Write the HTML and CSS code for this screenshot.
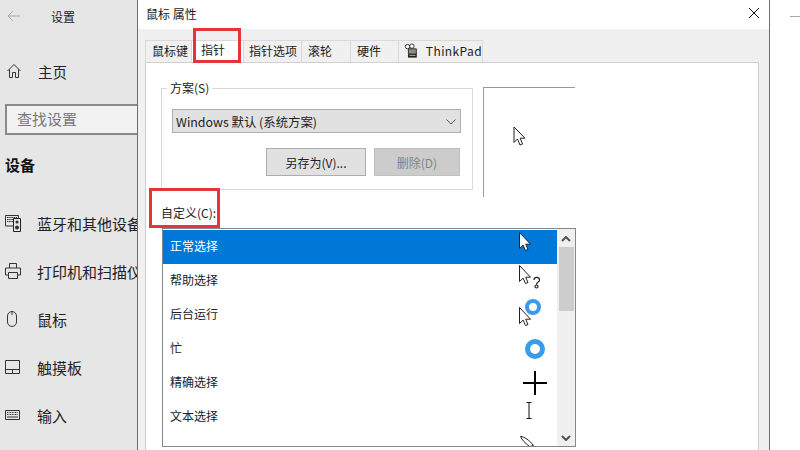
FILE: index.html
```html
<!DOCTYPE html>
<html lang="zh">
<head>
<meta charset="utf-8">
<title>鼠标 属性</title>
<link rel="stylesheet" href="styles.css">
</head>
<body>
<div class="app">
  <aside class="sidebar">
    <div class="side-head">
      <svg class="back" width="14" height="12" viewBox="0 0 14 12"><path d="M6 1 1 6l5 5M1 6h12" fill="none" stroke="#a8a8a8" stroke-width="1"/></svg>
      <span>设置</span>
    </div>
    <div class="home">
      <svg width="16" height="16" viewBox="0 0 16 16"><path d="M1.500 8 8 1.500 14.500 8M3.500 6.500V14.500H6.500V9.500H9.500V14.500H12.500V6.500" fill="none" stroke="#333" stroke-width="1"/></svg>
      <span>主页</span>
    </div>
    <div class="search">查找设置</div>
    <h2 class="side-title">设备</h2>
    <nav class="side-nav">
      <div class="nav-item">
        <svg width="16" height="17" viewBox="0 0 16 17"><path d="M.5.500h13v10.500H.5z" fill="none" stroke="#333"/><path d="M2 2.500h10M2 4.500h6M2 6.500h6" stroke="#333" stroke-dasharray="1.500 .7"/><path d="M8.500 3.500h7v13h-7z" fill="#e6e6e6" stroke="#222"/><circle cx="12" cy="7" r="1.500" fill="#333"/><circle cx="12" cy="12.500" r="2" fill="#333"/></svg>
        <span>蓝牙和其他设备</span>
      </div>
      <div class="nav-item">
        <svg width="16" height="16" viewBox="0 0 16 16"><path d="M4.500 5V.5h7V5M3.500 12H.5V5h15v7h-3M3.500 9.500h9v6h-9z" fill="none" stroke="#333"/></svg>
        <span>打印机和扫描仪</span>
      </div>
      <div class="nav-item">
        <svg width="16" height="16" viewBox="0 0 16 16"><path d="M2.500 5a4.500 4.500 0 0 1 9 0v6a4.500 4.500 0 0 1-9 0zM7 .5V4" fill="none" stroke="#333"/></svg>
        <span>鼠标</span>
      </div>
      <div class="nav-item">
        <svg width="16" height="14" viewBox="0 0 16 14"><path d="M.5.500h14v13H.5zM.5 9.500h14M7.500 9.500v4" fill="none" stroke="#333"/></svg>
        <span>触摸板</span>
      </div>
      <div class="nav-item">
        <svg width="16" height="10" viewBox="0 0 16 10"><path d="M.5.500h14v9H.5z" fill="none" stroke="#333"/><path d="M2 2.500h11M2 4.500h11" stroke="#333" stroke-dasharray="1 .6"/><path d="M2 7h11" stroke="#333"/></svg>
        <span>输入</span>
      </div>
    </nav>
  </aside>

  <main class="dialog">
    <header class="dialog-title">
      <span>鼠标 属性</span>
      <svg width="12" height="12" viewBox="0 0 12 12"><path d="M1 1l10 10M11 1 1 11" stroke="#111" stroke-width="1"/></svg>
    </header>
    <div class="dialog-body">
      <div class="tabs">
        <div class="tab tab-keys">鼠标键</div>
        <div class="tab tab-active">指针</div>
        <div class="tab tab-opts">指针选项</div>
        <div class="tab tab-wheel">滚轮</div>
        <div class="tab tab-hw">硬件</div>
        <div class="tab tab-tp">
          <svg width="18" height="18" viewBox="0 0 18 18"><circle cx="4" cy="4" r="2.500" fill="#fff" stroke="#222"/><circle cx="9" cy="3.500" r="2.500" fill="#fff" stroke="#222"/><path d="M5 6.500h9v6H5z" fill="#8a8f80" stroke="#222"/><path d="M4.500 12.500h10v4h-10z" fill="#222"/><path d="M6 14h7" stroke="#bbb"/></svg>
          <span>ThinkPad</span>
        </div>
      </div>
      <section class="panel">
        <div class="scheme-row">
          <fieldset class="group">
            <legend>方案(S)</legend>
            <div class="select">
              <span>Windows 默认 (系统方案)</span>
              <svg width="10" height="6" viewBox="0 0 10 6"><path d="M.5.500 5 5 9.500.5" fill="none" stroke="#555"/></svg>
            </div>
            <div class="btn-row">
              <div class="btn btn-save">另存为(V)...</div>
              <div class="btn btn-del">删除(D)</div>
            </div>
          </fieldset>
          <div class="preview">
            <svg class="preview-cursor" width="14" height="20" viewBox="0 0 14 20"><path class="arrow" d="M1 1V16.500L4.500 13 7 19 9.500 18 7.200 12.200H12Z"/></svg>
          </div>
        </div>
        <div class="custom-label">自定义(C):</div>
        <div class="listbox">
          <div class="rows">
            <div class="row row-selected">
              <span>正常选择</span>
              <svg class="cur" viewBox="0 0 42 34"><path class="arrow" transform="translate(4.500 2.500)" d="M0 0V16L3.600 12.600 6 18 8.500 17 6.200 11.700H11Z"/></svg>
            </div>
            <div class="row">
              <span>帮助选择</span>
              <svg class="cur" viewBox="0 0 42 34"><path class="arrow" transform="translate(4.500 1.500)" d="M0 0V16L3.600 12.600 6 18 8.500 17 6.200 11.700H11Z"/><path d="M19 16c0-3.500 5.500-3.500 5.500 0 0 2.500-3 2.200-3 4.500M20 22.500a1.500 1.500 0 1 0 3 0 1.500 1.500 0 1 0-3 0z" fill="none" stroke="#222" stroke-width="1.200"/></svg>
            </div>
            <div class="row">
              <span>后台运行</span>
              <svg class="cur" viewBox="0 0 42 34"><path class="arrow" transform="translate(4.500 9.500)" d="M0 0V16L3.600 12.600 6 18 8.500 17 6.200 11.700H11Z"/><circle class="ring" cx="18" cy="9" r="6" stroke-width="4"/></svg>
            </div>
            <div class="row">
              <span>忙</span>
              <svg class="cur" viewBox="0 0 42 34"><circle class="ring" cx="20" cy="17" r="7.500" stroke-width="5"/></svg>
            </div>
            <div class="row">
              <span>精确选择</span>
              <svg class="cur" viewBox="0 0 42 34"><path d="M8 17h24M20 5v24" stroke="#000" stroke-width="2"/></svg>
            </div>
            <div class="row">
              <span>文本选择</span>
              <svg class="cur" viewBox="0 0 42 34"><path d="M11.500 2.500h5M11.500 18.500h5M14 2.500v16" fill="none" stroke="#111" stroke-width="1"/></svg>
            </div>
            <div class="row">
              <span></span>
              <svg class="cur" viewBox="0 0 42 34"><path d="M5.500 2.500c4 0 9 4 13 9l-4 1C10 9 7 6 5.500 2.500z" fill="#fff" stroke="#222"/></svg>
            </div>
          </div>
          <div class="scrollbar">
            <div class="sb-btn"><svg width="10" height="6" viewBox="0 0 10 6"><path d="M1 5 5 1l4 4" fill="none" stroke="#505050" stroke-width="2"/></svg></div>
            <div class="sb-thumb"></div>
            <div class="sb-space"></div>
            <div class="sb-btn"><svg width="10" height="6" viewBox="0 0 10 6"><path d="M1 1l4 4 4-4" fill="none" stroke="#505050" stroke-width="2"/></svg></div>
          </div>
        </div>
      </section>
    </div>
  </main>

  <div class="rest"><div class="dash"></div></div>

  <div class="mark mark-tab"></div>
  <div class="mark mark-custom"></div>
</div>
</body>
</html>
```

FILE: styles.css
```css
* { box-sizing: border-box; }
html, body { margin: 0; padding: 0; }
body {
  width: 800px;
  height: 450px;
  overflow: hidden;
  font-family: "Noto Sans CJK SC", "Noto Sans", sans-serif;
  font-size: 12px;
  color: #1a1a1a;
  background: #fff;
}
.app { position: relative; display: flex; width: 800px; height: 450px; overflow: hidden; }

/* Settings sidebar */
.sidebar {
  flex: 0 0 138px;
  overflow: hidden;
  background: #e6e6e6;
  border-right: 1px solid #6e6e6e;
  white-space: nowrap;
}
.side-head { display: flex; align-items: center; height: 32px; padding-left: 7px; font-size: 12px; color: #222; }
.side-head span { margin-left: 30px; }
.home { display: flex; align-items: center; height: 24px; margin-top: 27px; padding-left: 6px; font-size: 14.500px; color: #222; }
.home span { margin-left: 16px; }
.search {
  width: 150px;
  height: 31px;
  margin: 21px 0 0 5px;
  padding-left: 10px;
  border: 2px solid #8a8a8a;
  background: #f2f2f2;
  font-size: 15px;
  line-height: 25px;
  color: #777;
}
.side-title { margin: 18px 0 0 5px; height: 24px; font-size: 15px; line-height: 24px; font-weight: 700; color: #111; }
.side-nav { display: flex; flex-direction: column; margin-top: 22px; }
.nav-item { display: flex; align-items: center; height: 48px; padding-left: 5px; font-size: 15px; color: #222; }
.nav-item svg { flex: 0 0 16px; }
.nav-item span { margin-left: 16px; }

/* Dialog */
.dialog { flex: 0 0 632px; display: flex; flex-direction: column; border-right: 1px solid #6e6e6e; background: #f0f0f0; }
.dialog-title { display: flex; align-items: center; justify-content: space-between; flex: 0 0 29px; padding: 0 9px 3px 8px; background: #fff; color: #222; }
.dialog-body { flex: 1; display: flex; flex-direction: column; padding: 11px 10px 0 7px; }
.tabs { display: flex; flex: 0 0 22px; align-items: stretch; }
.tab {
  display: flex;
  align-items: center;
  padding-left: 6px;
  padding-bottom: 2px;
  border: 1px solid #d9d9d9;
  border-left-width: 0;
  border-bottom: 0;
  background: #f0f0f0;
  color: #222;
  white-space: nowrap;
}
.tab-keys { width: 47px; border-left-width: 1px; }
.tab-active { width: 52px; background: #fff; padding-left: 9px; padding-bottom: 4px; }
.tab-opts { width: 58px; padding-left: 5px; }
.tab-wheel { width: 49px; }
.tab-hw { width: 48px; }
.tab-tp { width: 84px; padding-left: 5px; gap: 6px; letter-spacing: .4px; }

.panel { flex: 1; padding: 17px 0 0 15px; background: #fff; border: 1px solid #d0d0d0; border-bottom: 0; }
.scheme-row { display: flex; gap: 10px; align-items: flex-start; }
.group { flex: 0 0 312px; height: 110px; margin: 0; padding: 13px 11px 0 10px; border: 1px solid #d9d9d9; min-width: 0; }
.group legend { margin-left: -5px; padding: 0 3px; height: 16px; line-height: 16px; color: #222; }
.select { display: flex; align-items: center; justify-content: space-between; height: 24px; padding: 2px 4px 0 3px; background: #e1e1e1; border: 1px solid #adadad; font-size: 12.400px; color: #222; }
.btn-row { display: flex; justify-content: flex-end; gap: 8px; margin: 15px 1px 0 0; }
.btn { display: flex; align-items: center; justify-content: center; height: 28px; border: 1px solid #adadad; background: #e1e1e1; color: #222; }
.btn-save { width: 100px; }
.btn-del { width: 86px; background: #ccc; border-color: #bfbfbf; color: #838383; }
.preview { flex: 0 0 92px; height: 110px; margin-top: 7px; border-top: 1px solid #999; border-left: 1px solid #999; padding: 38px 0 0 29px; }
.preview-cursor { display: block; }
.arrow { fill: #fff; stroke: #222; stroke-width: 1; stroke-linejoin: miter; }
.ring { fill: none; stroke: #3a9bec; }
.custom-label { height: 16px; margin-top: 8px; line-height: 16px; color: #222; }
.listbox { display: flex; width: 414px; height: 219px; margin: 7px 0 0 1px; border: 1px solid #828790; background: #fff; }
.rows { flex: 1; min-width: 0; padding-top: 1px; overflow: hidden; }
.row { display: flex; align-items: center; justify-content: space-between; height: 34px; padding-left: 7px; color: #222; }
.row span { margin-bottom: 4px; }
.row-selected { background: #0078d7; color: #fff; }
.cur { flex: 0 0 42px; width: 42px; height: 34px; display: block; }
.scrollbar { flex: 0 0 18px; display: flex; flex-direction: column; align-items: center; background: #f0f0f0; padding-top: 1px; }
.sb-btn { flex: 0 0 17px; width: 100%; display: flex; align-items: center; justify-content: center; }
.sb-thumb { flex: 0 0 64px; width: 15px; background: #cdcdcd; }
.sb-space { flex: 1; }

/* Right window */
.rest { flex: 1; background: #fff; padding: 16px 0 0 20px; }
.dash { height: 1px; background: #aaa; }

/* Red annotation boxes over the screenshot */
.mark { position: absolute; border: 3px solid #e8323c; pointer-events: none; }
.mark-tab { left: 193px; top: 28px; width: 48px; height: 35px; }
.mark-custom { left: 149px; top: 188px; width: 71px; height: 40px; }
```
